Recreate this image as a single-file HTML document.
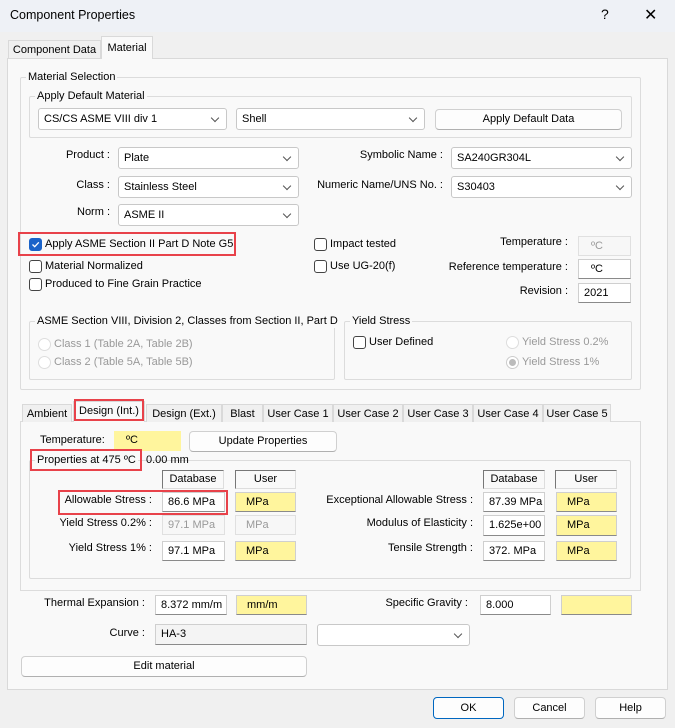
<!DOCTYPE html>
<html><head><meta charset="utf-8"><style>
*{box-sizing:border-box;margin:0;padding:0}
body{width:675px;height:728px;overflow:hidden;background:#f0f0f0;font-family:"Liberation Sans",sans-serif;font-size:11px;color:#000;position:relative}
.a{position:absolute;white-space:nowrap}
.r{position:absolute;white-space:nowrap;text-align:right}
.box{position:absolute;background:#fff;border:1px solid #cfcfcf;border-bottom-color:#8a8a8a;padding-left:5px;line-height:19px;white-space:nowrap;overflow:hidden}
.y{background:#fff59d}
.dis{background:#f7f7f7;color:#999;border-color:#e0e0e0}
.cb{position:absolute;background:#fff;border:1px solid #c8c8c8;border-radius:3px;padding-left:5px;line-height:20px}
.cb:after{content:"";position:absolute;right:8px;top:6px;width:5px;height:5px;border-right:1px solid #555;border-bottom:1px solid #555;transform:rotate(45deg)}
.btn{position:absolute;background:#fdfdfd;border:1px solid #d0d0d0;border-bottom-color:#b0b0b0;border-radius:4px;text-align:center;line-height:19px}
.grp{position:absolute;border:1px solid #dcdcdc;border-radius:2px}
.lg{position:absolute;background:#f9f9f9;padding:0 2px;white-space:nowrap;line-height:14px}
.chk{position:absolute;width:13px;height:13px;border:1px solid #444;border-radius:3px;background:#fff}
.rad{position:absolute;width:13px;height:13px;border:1px solid #c8c8c8;border-radius:50%;background:#fff}
.red{position:absolute;border:2px solid #e8424a}
.tab{position:absolute;border:1px solid #d9d9d9;border-bottom:none;background:#f0f0f0;text-align:center;line-height:18px}
.hdr{position:absolute;border:1px solid #777;border-right-color:#ddd;border-bottom-color:#ddd;background:#f9f9f9;text-align:center;line-height:17px}
</style></head><body>
<div class="a" style="left:0;top:0;width:675px;height:32px;background:#eef1f6"></div>
<div class="a" style="left:10px;top:8px;font-size:12.5px">Component Properties</div>
<div class="a" style="left:601px;top:6px;font-size:14px">?</div>
<div class="a" style="left:644px;top:5px;font-size:16px">✕</div>

<div class="tab" style="left:8px;top:40px;width:93px;height:18px">Component Data</div>
<div class="a" style="left:7px;top:58px;width:661px;height:632px;background:#f9f9f9;border:1px solid #d9d9d9"></div>
<div class="tab" style="left:101px;top:36px;width:52px;height:23px;background:#f9f9f9;line-height:22px">Material</div>

<div class="grp" style="left:20px;top:77px;width:621px;height:313px"></div>
<div class="lg" style="left:26px;top:70px">Material Selection</div>
<div class="grp" style="left:29px;top:96px;width:603px;height:42px"></div>
<div class="lg" style="left:35px;top:89px">Apply Default Material</div>
<div class="cb" style="left:38px;top:108px;width:189px;height:22px">CS/CS ASME VIII div 1</div>
<div class="cb" style="left:236px;top:108px;width:189px;height:22px">Shell</div>
<div class="btn" style="left:435px;top:109px;width:187px;height:21px">Apply Default Data</div>

<div class="r" style="right:565px;top:149px">Product :</div>
<div class="cb" style="left:118px;top:147px;width:181px;height:22px">Plate</div>
<div class="r" style="right:565px;top:179px">Class :</div>
<div class="cb" style="left:118px;top:176px;width:181px;height:22px">Stainless Steel</div>
<div class="r" style="right:565px;top:206px">Norm :</div>
<div class="cb" style="left:118px;top:204px;width:181px;height:22px">ASME II</div>
<div class="r" style="right:232px;top:149px">Symbolic Name :</div>
<div class="cb" style="left:451px;top:147px;width:181px;height:22px">SA240GR304L</div>
<div class="r" style="right:232px;top:179px">Numeric Name/UNS No. :</div>
<div class="cb" style="left:451px;top:176px;width:181px;height:22px">S30403</div>

<div class="red" style="left:18px;top:232px;width:218px;height:24px"></div>
<div class="chk" style="left:29px;top:238px;background:#1a63c9;border-color:#1a63c9"><svg width="11" height="11" style="position:absolute;left:0;top:0"><path d="M2.5 5.5 L4.7 7.7 L8.8 3.3" stroke="#fff" stroke-width="1.3" fill="none"/></svg></div>
<div class="a" style="left:45px;top:238px">Apply ASME Section II Part D Note G5</div>
<div class="chk" style="left:29px;top:260px"></div>
<div class="a" style="left:45px;top:260px">Material Normalized</div>
<div class="chk" style="left:29px;top:278px"></div>
<div class="a" style="left:45px;top:278px">Produced to Fine Grain Practice</div>
<div class="chk" style="left:314px;top:238px"></div>
<div class="a" style="left:330px;top:238px">Impact tested</div>
<div class="chk" style="left:314px;top:260px"></div>
<div class="a" style="left:330px;top:260px">Use UG-20(f)</div>
<div class="r" style="right:107px;top:236px">Temperature :</div>
<div class="box dis" style="left:578px;top:236px;width:53px;height:20px;padding-left:12px">ºC</div>
<div class="r" style="right:107px;top:261px">Reference temperature :</div>
<div class="box" style="left:578px;top:259px;width:53px;height:20px;padding-left:12px">ºC</div>
<div class="r" style="right:107px;top:285px">Revision :</div>
<div class="box" style="left:578px;top:283px;width:53px;height:20px">2021</div>

<div class="grp" style="left:29px;top:321px;width:306px;height:59px"></div>
<div class="lg" style="left:35px;top:314px">ASME Section VIII, Division 2, Classes from Section II, Part D</div>
<div class="rad" style="left:38px;top:338px;border-color:#ddd"></div>
<div class="a" style="left:54px;top:338px;color:#999">Class 1 (Table 2A, Table 2B)</div>
<div class="rad" style="left:38px;top:356px;border-color:#ddd"></div>
<div class="a" style="left:54px;top:356px;color:#999">Class 2 (Table 5A, Table 5B)</div>

<div class="grp" style="left:344px;top:321px;width:288px;height:59px"></div>
<div class="lg" style="left:350px;top:314px">Yield Stress</div>
<div class="chk" style="left:353px;top:336px"></div>
<div class="a" style="left:369px;top:336px">User Defined</div>
<div class="rad" style="left:506px;top:336px;border-color:#ddd"></div>
<div class="a" style="left:522px;top:336px;color:#999">Yield Stress 0.2%</div>
<div class="rad" style="left:506px;top:356px;border-color:#ccc"><div style="position:absolute;left:2px;top:2px;width:7px;height:7px;border-radius:50%;background:#bbb"></div></div>
<div class="a" style="left:522px;top:356px;color:#999">Yield Stress 1%</div>

<div class="a" style="left:20px;top:421px;width:621px;height:170px;border:1px solid #dcdcdc;background:#f9f9f9"></div>
<div class="tab" style="left:22px;top:404px;width:50px;height:18px">Ambient</div>
<div class="tab" style="left:146px;top:404px;width:76px;height:18px">Design (Ext.)</div>
<div class="tab" style="left:222px;top:404px;width:41px;height:18px">Blast</div>
<div class="tab" style="left:263px;top:404px;width:70px;height:18px">User Case 1</div>
<div class="tab" style="left:333px;top:404px;width:70px;height:18px">User Case 2</div>
<div class="tab" style="left:403px;top:404px;width:70px;height:18px">User Case 3</div>
<div class="tab" style="left:473px;top:404px;width:70px;height:18px">User Case 4</div>
<div class="tab" style="left:543px;top:404px;width:68px;height:18px">User Case 5</div>
<div class="tab" style="left:73px;top:401px;width:72px;height:21px;background:#f9f9f9;line-height:18px">Design (Int.)</div>
<div class="red" style="left:74px;top:399px;width:70px;height:22px"></div>

<div class="a" style="left:40px;top:434px">Temperature:</div>
<div class="box y" style="left:114px;top:431px;width:67px;height:20px;border:none;padding-left:12px">ºC</div>
<div class="btn" style="left:189px;top:431px;width:148px;height:21px">Update Properties</div>

<div class="grp" style="left:29px;top:460px;width:602px;height:119px"></div>
<div class="lg" style="left:35px;top:453px">Properties at 475 ºC</div>
<div class="a" style="left:146px;top:454px">0.00 mm</div>
<div class="red" style="left:30px;top:449px;width:112px;height:22px"></div>

<div class="hdr" style="left:162px;top:470px;width:62px;height:19px">Database</div>
<div class="hdr" style="left:235px;top:470px;width:61px;height:19px">User</div>
<div class="hdr" style="left:483px;top:470px;width:62px;height:19px">Database</div>
<div class="hdr" style="left:555px;top:470px;width:62px;height:19px">User</div>

<div class="r" style="right:523px;top:494px">Allowable Stress :</div>
<div class="box" style="left:162px;top:492px;width:63px;height:20px">86.6 MPa</div>
<div class="box y" style="left:235px;top:492px;width:61px;height:20px;padding-left:10px">MPa</div>
<div class="red" style="left:58px;top:490px;width:170px;height:25px"></div>
<div class="r" style="right:523px;top:517px">Yield Stress 0.2% :</div>
<div class="box dis" style="left:162px;top:515px;width:63px;height:20px">97.1 MPa</div>
<div class="box dis" style="left:235px;top:515px;width:61px;height:20px;padding-left:10px">MPa</div>
<div class="r" style="right:523px;top:542px">Yield Stress 1% :</div>
<div class="box" style="left:162px;top:541px;width:63px;height:20px">97.1 MPa</div>
<div class="box y" style="left:235px;top:541px;width:61px;height:20px;padding-left:10px">MPa</div>

<div class="r" style="right:202px;top:494px">Exceptional Allowable Stress :</div>
<div class="box" style="left:483px;top:492px;width:62px;height:20px">87.39 MPa</div>
<div class="box y" style="left:556px;top:492px;width:61px;height:20px;padding-left:10px">MPa</div>
<div class="r" style="right:202px;top:517px">Modulus of Elasticity :</div>
<div class="box" style="left:483px;top:515px;width:62px;height:21px">1.625e+00</div>
<div class="box y" style="left:556px;top:515px;width:61px;height:21px;padding-left:10px">MPa</div>
<div class="r" style="right:202px;top:542px">Tensile Strength :</div>
<div class="box" style="left:483px;top:541px;width:62px;height:20px">372. MPa</div>
<div class="box y" style="left:556px;top:541px;width:61px;height:20px;padding-left:10px">MPa</div>

<div class="r" style="right:530px;top:597px">Thermal Expansion :</div>
<div class="box" style="left:155px;top:595px;width:72px;height:20px">8.372 mm/m</div>
<div class="box y" style="left:236px;top:595px;width:71px;height:20px;padding-left:10px">mm/m</div>
<div class="r" style="right:207px;top:597px">Specific Gravity :</div>
<div class="box" style="left:480px;top:595px;width:71px;height:20px">8.000</div>
<div class="box y" style="left:561px;top:595px;width:71px;height:20px"></div>
<div class="r" style="right:530px;top:627px">Curve :</div>
<div class="box" style="left:155px;top:624px;width:152px;height:21px;background:#f4f4f4">HA-3</div>
<div class="cb" style="left:317px;top:624px;width:153px;height:22px"></div>
<div class="btn" style="left:21px;top:656px;width:286px;height:21px">Edit material</div>

<div class="btn" style="left:433px;top:697px;width:71px;height:22px;border:1px solid #0067c0;line-height:20px">OK</div>
<div class="btn" style="left:514px;top:697px;width:71px;height:22px;line-height:20px">Cancel</div>
<div class="btn" style="left:595px;top:697px;width:71px;height:22px;line-height:20px">Help</div>
</body></html>
